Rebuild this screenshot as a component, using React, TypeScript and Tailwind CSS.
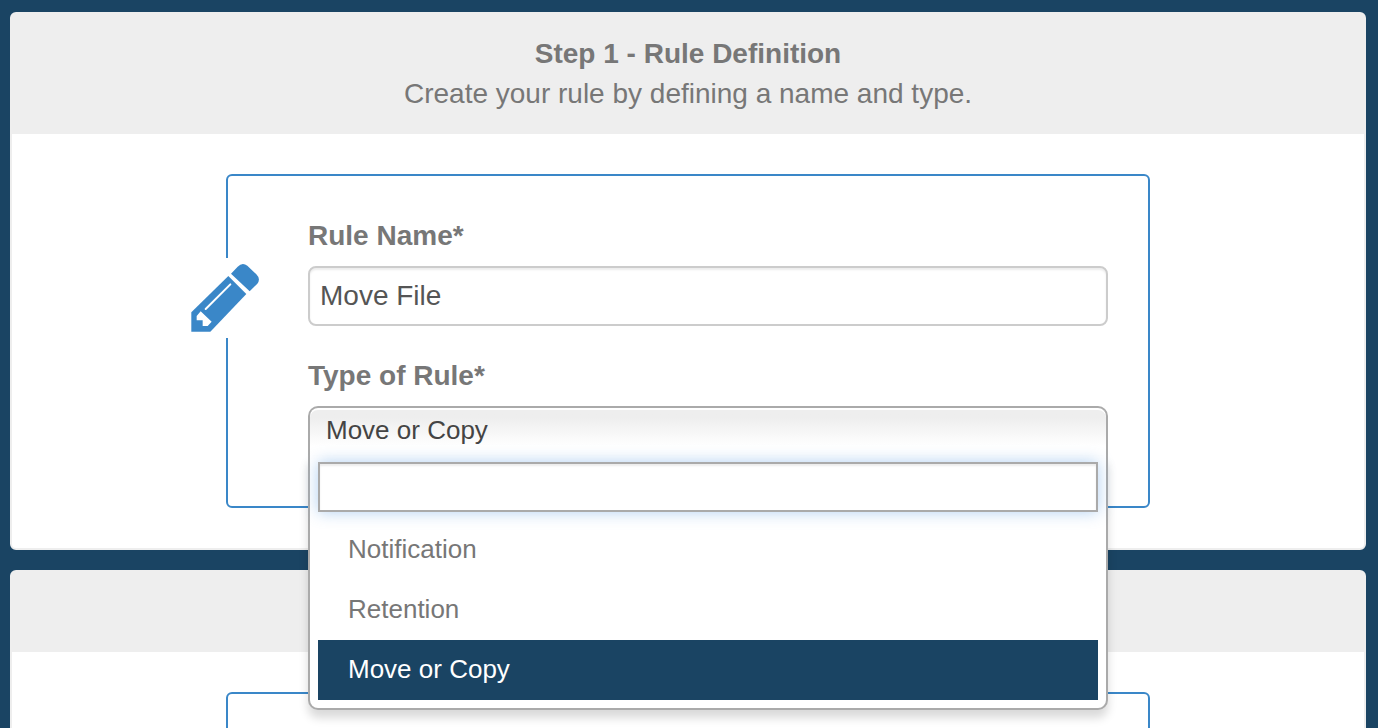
import React, { useState } from 'react';
import clsx from 'clsx';

const RULE_TYPES = ['Notification', 'Retention', 'Move or Copy'];

const PencilIcon = () => (
  <svg viewBox="54 54 240 240" className="h-20 w-20" aria-hidden="true">
    <g fill="#3a87c8">
      <path d="M183 101 L203 80 Q217 65 232 77 L259 103 Q273 117 262 131 L239 154 Z" />
      <path d="M175 108 L229 162 L121 275 H64 V217 Z" />
    </g>
    <path d="M107 207 L181 133" stroke="#fff" strokeWidth="6" strokeLinecap="round" />
    <path d="M80 241 V228 L92 214 L125 245 L113 258 H98 V241 Z" fill="#fff" />
  </svg>
);

type PanelProps = {
  title?: string;
  description?: string;
  children?: React.ReactNode;
};

const Panel = ({ title, description, children }: PanelProps) => (
  <section className="rounded-md border-2 border-[#eee] bg-white">
    <header className="bg-[#eee] px-5 py-5 text-center text-[28px] leading-10">
      <h2 className="min-h-10 font-bold">{title}</h2>
      {description && <p>{description}</p>}
    </header>
    <div className="px-5 py-10">{children}</div>
  </section>
);

const FormBox = ({ children }: { children?: React.ReactNode }) => (
  <div className="relative mx-auto min-h-40 max-w-[924px] rounded-md border-2 border-[#3a87c8] py-10 pr-10 pl-20">
    {children}
  </div>
);

const RuleTypeSelect = () => {
  const [open, setOpen] = useState(true);
  const [selected, setSelected] = useState('Move or Copy');
  const [query, setQuery] = useState('');

  const options = RULE_TYPES.filter((type) => type.toLowerCase().includes(query.toLowerCase()));

  const choose = (type: string) => {
    setSelected(type);
    setQuery('');
    setOpen(false);
  };

  return (
    <div className="relative h-[60px] text-[26px]">
      <button
        id="rule-type"
        type="button"
        aria-haspopup="listbox"
        aria-expanded={open}
        onClick={() => setOpen(!open)}
        className={clsx(
          'block h-[50px] w-full border-2 border-[#aaa] bg-linear-to-b from-[#eee] from-20% to-white to-80% px-4 pb-1 text-left leading-10 text-[#444] shadow-[inset_0_2px_0_#fff]',
          open ? 'rounded-t-[10px] border-b-0' : 'rounded-[10px]',
        )}
      >
        {selected}
      </button>

      {open && (
        <div className="absolute inset-x-0 top-[50px] z-10 rounded-b-[10px] border-2 border-t-0 border-[#aaa] bg-white px-2 pt-1.5 pb-2 shadow-[0_8px_10px_rgba(0,0,0,0.15)]">
          <input
            type="text"
            aria-label="Search rule types"
            value={query}
            onChange={(e) => setQuery(e.target.value)}
            className="block h-[50px] w-full border-2 border-[#aaa] bg-white px-2 shadow-[inset_0_2px_2px_rgba(0,0,0,0.08),0_0_16px_rgba(82,150,225,0.45)] outline-none"
          />
          <ul role="listbox" aria-labelledby="rule-type-label" className="mt-2">
            {options.map((type) => (
              <li
                key={type}
                role="option"
                aria-selected={type === selected}
                onClick={() => choose(type)}
                className={clsx(
                  'cursor-pointer px-[30px] pb-0.5 leading-[58px]',
                  type === selected ? 'bg-[#1a4463] text-white' : 'text-[#777]',
                )}
              >
                {type}
              </li>
            ))}
          </ul>
        </div>
      )}
    </div>
  );
};

const App = () => {
  const [name, setName] = useState('Move File');

  return (
    <main className="flex h-screen flex-col gap-5 overflow-hidden bg-[#1a4463] pt-3 pr-3 pl-2.5 font-['Liberation_Sans',Arial,sans-serif] text-[#777]">
      <Panel title="Step 1 - Rule Definition" description="Create your rule by defining a name and type.">
        <FormBox>
          {/* Sits over the left border and interrupts it */}
          <div className="absolute top-[82px] left-0 -translate-x-1/2 bg-white">
            <PencilIcon />
          </div>

          <div className="flex flex-col gap-[30px] text-[28px] leading-10">
            <div className="flex flex-col gap-2.5">
              <label htmlFor="rule-name" className="font-bold">
                Rule Name*
              </label>
              <input
                id="rule-name"
                type="text"
                value={name}
                onChange={(e) => setName(e.target.value)}
                className="h-[60px] w-full rounded-lg border-2 border-[#ccc] bg-white px-2.5 text-[#555] shadow-[inset_0_2px_2px_rgba(0,0,0,0.075)] outline-none"
              />
            </div>
            <div className="flex flex-col gap-2.5">
              <label id="rule-type-label" htmlFor="rule-type" className="font-bold">
                Type of Rule*
              </label>
              <RuleTypeSelect />
            </div>
          </div>
        </FormBox>
      </Panel>

      <Panel>
        <FormBox />
      </Panel>
    </main>
  );
};

export default App;
